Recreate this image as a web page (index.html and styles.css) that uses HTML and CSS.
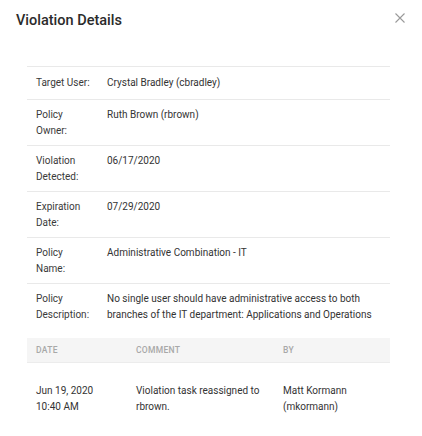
FILE: index.html
```html
<!DOCTYPE html>
<html>
<head>
<meta charset="utf-8">
<link rel="stylesheet" href="styles.css">
</head>
<body>
<div class="modal">
  <div class="modal-header">
    <h1 class="modal-title">Violation Details</h1>
    <button class="close-btn" aria-label="Close">
      <svg width="10" height="10" viewBox="0 0 10 10"><path d="M0.5 0.5 L9.5 9.5 M9.5 0.5 L0.5 9.5" stroke="#9a9a9a" stroke-width="1.1" fill="none"/></svg>
    </button>
  </div>
  <div class="modal-body">
    <table class="details">
      <tr class="row-first"><td class="label">Target User:</td><td class="value">Crystal Bradley (cbradley)</td></tr>
      <tr><td class="label">Policy Owner:</td><td class="value">Ruth Brown (rbrown)</td></tr>
      <tr><td class="label">Violation Detected:</td><td class="value">06/17/2020</td></tr>
      <tr><td class="label">Expiration Date:</td><td class="value">07/29/2020</td></tr>
      <tr><td class="label">Policy Name:</td><td class="value">Administrative Combination - IT</td></tr>
      <tr><td class="label">Policy Description:</td><td class="value">No single user should have administrative access to both branches of the IT department: Applications and Operations</td></tr>
    </table>
    <table class="comments">
      <thead>
        <tr><th class="c-date">Date</th><th class="c-comment">Comment</th><th class="c-by">By</th></tr>
      </thead>
      <tbody>
        <tr><td>Jun 19, 2020<br>10:40 AM</td><td>Violation task reassigned to rbrown.</td><td>Matt Kormann (mkormann)</td></tr>
      </tbody>
    </table>
  </div>
</div>
</body>
</html>
```
FILE: styles.css
```css
* { box-sizing: border-box; }
html, body { margin: 0; padding: 0; background: #fff; }
body {
  font-family: Roboto, "Liberation Sans", Arial, sans-serif;
  color: #333;
  width: 422px;
  height: 436px;
  overflow: hidden;
}
.modal { width: 422px; }
.modal-header {
  display: flex;
  justify-content: space-between;
  align-items: flex-start;
  padding: 11px 17px 0 16px;
  height: 66px;
}
.modal-title {
  margin: 0;
  font-size: 14.5px;
  font-weight: 500;
  line-height: 20px;
  color: #2b2b2b;
}
.close-btn {
  border: 0;
  background: none;
  padding: 0;
  margin-top: 2px;
  width: 10px;
  height: 10px;
  display: block;
  cursor: pointer;
}
.close-btn svg { display: block; }
.modal-body { padding: 0 32px 0 27px; }
table { border-collapse: collapse; width: 363px; }
.details { table-layout: fixed; }
.details td {
  border-top: 1px solid #e9e9e9;
  font-size: 10px;
  line-height: 16px;
  padding: 7px 0 6px 0;
  vertical-align: top;
  color: #333;
}
.details .label { width: 80px; padding-left: 9px; padding-right: 15px; color: #3a3a3a; }
.details .value { padding-right: 8px; }
.details .row-first td { padding-top: 8px; padding-bottom: 8px; }
.comments { margin-top: 9px; table-layout: fixed; }
.comments th {
  background: #f5f5f5;
  border-bottom: 1px solid #ececec;
  text-align: left;
  font-size: 8.5px;
  font-weight: 500;
  text-transform: uppercase;
  letter-spacing: 0.3px;
  color: #a8a8a8;
  height: 24px;
  padding: 0 9px;
  vertical-align: middle;
}
.comments .c-date { width: 100px; }
.comments .c-comment { width: 147px; }
.comments .c-by { width: 116px; }
.comments td {
  font-size: 10px;
  line-height: 16px;
  padding: 20px 9px 10px 9px;
  vertical-align: top;
  color: #333;
}
```
